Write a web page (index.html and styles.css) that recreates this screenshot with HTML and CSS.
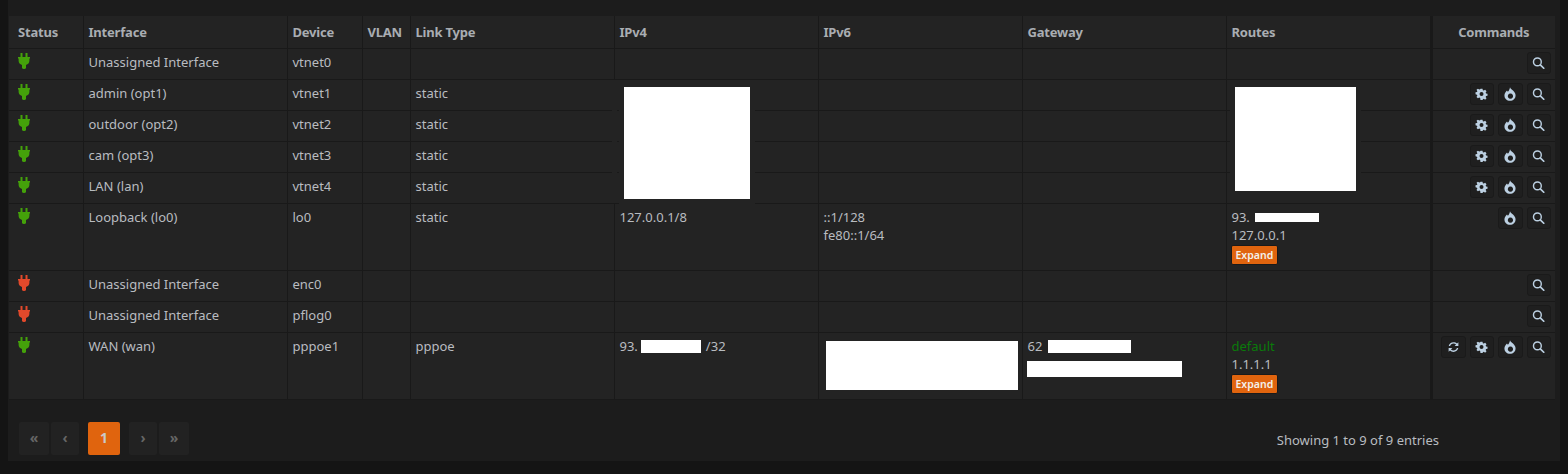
FILE: index.html
```html
<!DOCTYPE html>
<html lang="en">
<head>
<meta charset="utf-8">
<title>Interfaces overview</title>
<link rel="stylesheet" href="styles.css">
</head>
<body>
<svg class="sprites" width="0" height="0" aria-hidden="true">
  <symbol id="plug" viewBox="0 0 12 16"><path d="M2.500 0h2v4h3V0h2v4H12v1.500h-.6v2.200c0 2-1.300 3.700-3.400 4.200V15.500H6.900V16H5.100v-.5H4V11.900C1.900 11.400.6 9.700.6 7.700V5.500H0V4h2.500z"/></symbol>
  <symbol id="cog" viewBox="0 0 16 16"><path d="M6.500 0h3l.5 2.300 1.400.6 2-1.300 2.100 2.100-1.300 2 .6 1.400 2.200.4v3l-2.200.5-.6 1.400 1.300 2-2.100 2.100-2-1.300-1.400.6-.5 2.200h-3L6 13.800l-1.400-.6-2 1.300L.5 12.400l1.300-2-.6-1.400L-1 8.500v-3l2.200-.4.6-1.400-1.300-2L2.600 0l2 1.300L6 .7zM8 5a3 3 0 1 0 0 6 3 3 0 0 0 0-6z" transform="translate(.9 .9) scale(.89)" fill-rule="evenodd"/></symbol>
  <symbol id="fire" viewBox="0 0 14 16"><path fill-rule="evenodd" d="M7 0c.5 1.500 2 2.500 3.500 4 2 1.800 3 3.700 3 5.700C13.500 13.300 10.600 16 7 16S.5 13.300.5 9.700C.5 7.200 2 5.200 3.500 3.800l1 1.700C5.700 4 6.800 2 7 0zM7.500 7.500a3 3 0 1 0 .01 0z"/></symbol>
  <symbol id="search" viewBox="0 0 16 16"><circle cx="6.500" cy="6.500" r="5.200" fill="none" stroke="currentColor" stroke-width="1.900"/><path d="M10.400 10.400L15 15" fill="none" stroke="currentColor" stroke-width="2.300" stroke-linecap="round"/></symbol>
  <symbol id="refresh" viewBox="0 0 16 16"><path d="M1.600 6.700C2.200 3.600 4.800 1.500 8 1.500c1.900 0 3.500.7 4.700 1.900L14.500 1.600v5h-5l1.900-1.900c-.9-.9-2.100-1.400-3.400-1.400-2.200 0-4 1.400-4.500 3.400zM14.400 9.300C13.800 12.400 11.200 14.500 8 14.500c-1.900 0-3.500-.7-4.700-1.900L1.500 14.400v-5h5l-1.900 1.900c.9.900 2.100 1.400 3.400 1.400 2.200 0 4-1.400 4.500-3.400z"/></symbol>
</svg>
<main class="panel">
  <div class="table-wrap">
    <table class="grid">
      <colgroup>
        <col class="c-status"><col class="c-iface"><col class="c-device"><col class="c-vlan"><col class="c-link">
        <col class="c-addr"><col class="c-addr"><col class="c-addr"><col class="c-routes"><col class="c-cmd">
      </colgroup>
      <thead>
        <tr><th>Status</th><th>Interface</th><th>Device</th><th>VLAN</th><th>Link Type</th><th>IPv4</th><th>IPv6</th><th>Gateway</th><th>Routes</th><th class="cmd-head">Commands</th></tr>
      </thead>
      <tbody>
        <tr>
          <td><svg class="plug up"><use href="#plug"/></svg></td><td>Unassigned Interface</td><td>vtnet0</td><td></td><td></td><td></td><td></td><td></td><td></td>
          <td class="cmds"><div class="btns"><button class="btn"><svg class="ico"><use href="#search"/></svg></button></div></td>
        </tr>
        <tr>
          <td><svg class="plug up"><use href="#plug"/></svg></td><td>admin (opt1)</td><td>vtnet1</td><td></td><td>static</td><td></td><td></td><td></td><td></td>
          <td class="cmds"><div class="btns"><button class="btn"><svg class="ico"><use href="#cog"/></svg></button><button class="btn"><svg class="ico tall-ico"><use href="#fire"/></svg></button><button class="btn"><svg class="ico"><use href="#search"/></svg></button></div></td>
        </tr>
        <tr>
          <td><svg class="plug up"><use href="#plug"/></svg></td><td>outdoor (opt2)</td><td>vtnet2</td><td></td><td>static</td><td></td><td></td><td></td><td></td>
          <td class="cmds"><div class="btns"><button class="btn"><svg class="ico"><use href="#cog"/></svg></button><button class="btn"><svg class="ico tall-ico"><use href="#fire"/></svg></button><button class="btn"><svg class="ico"><use href="#search"/></svg></button></div></td>
        </tr>
        <tr>
          <td><svg class="plug up"><use href="#plug"/></svg></td><td>cam (opt3)</td><td>vtnet3</td><td></td><td>static</td><td></td><td></td><td></td><td></td>
          <td class="cmds"><div class="btns"><button class="btn"><svg class="ico"><use href="#cog"/></svg></button><button class="btn"><svg class="ico tall-ico"><use href="#fire"/></svg></button><button class="btn"><svg class="ico"><use href="#search"/></svg></button></div></td>
        </tr>
        <tr>
          <td><svg class="plug up"><use href="#plug"/></svg></td><td>LAN (lan)</td><td>vtnet4</td><td></td><td>static</td><td></td><td></td><td></td><td></td>
          <td class="cmds"><div class="btns"><button class="btn"><svg class="ico"><use href="#cog"/></svg></button><button class="btn"><svg class="ico tall-ico"><use href="#fire"/></svg></button><button class="btn"><svg class="ico"><use href="#search"/></svg></button></div></td>
        </tr>
        <tr class="tall">
          <td><svg class="plug up"><use href="#plug"/></svg></td><td>Loopback (lo0)</td><td>lo0</td><td></td><td>static</td><td>127.0.0.1/8</td><td>::1/128<br>fe80::1/64</td><td></td>
          <td>93.<span class="mask mask-route"></span><br>127.0.0.1<br><span class="expand">Expand</span></td>
          <td class="cmds"><div class="btns"><button class="btn"><svg class="ico tall-ico"><use href="#fire"/></svg></button><button class="btn"><svg class="ico"><use href="#search"/></svg></button></div></td>
        </tr>
        <tr>
          <td><svg class="plug down"><use href="#plug"/></svg></td><td>Unassigned Interface</td><td>enc0</td><td></td><td></td><td></td><td></td><td></td><td></td>
          <td class="cmds"><div class="btns"><button class="btn"><svg class="ico"><use href="#search"/></svg></button></div></td>
        </tr>
        <tr>
          <td><svg class="plug down"><use href="#plug"/></svg></td><td>Unassigned Interface</td><td>pflog0</td><td></td><td></td><td></td><td></td><td></td><td></td>
          <td class="cmds"><div class="btns"><button class="btn"><svg class="ico"><use href="#search"/></svg></button></div></td>
        </tr>
        <tr class="tall">
          <td><svg class="plug up"><use href="#plug"/></svg></td><td>WAN (wan)</td><td>pppoe1</td><td></td><td>pppoe</td><td>93.<span class="mask mask-v4"></span>/32</td><td></td>
          <td>62<span class="mask mask-gw"></span></td>
          <td><span class="default">default</span><br>1.1.1.1<br><span class="expand">Expand</span></td>
          <td class="cmds"><div class="btns"><button class="btn"><svg class="ico"><use href="#refresh"/></svg></button><button class="btn"><svg class="ico"><use href="#cog"/></svg></button><button class="btn"><svg class="ico tall-ico"><use href="#fire"/></svg></button><button class="btn"><svg class="ico"><use href="#search"/></svg></button></div></td>
        </tr>
      </tbody>
    </table>
    <div class="redact r-v4"></div>
    <div class="redact r-routes"></div>
    <div class="redact r-v6"></div>
    <div class="redact r-gw"></div>
  </div>
  <footer class="foot">
    <nav class="pager">
      <a class="pg">«</a><a class="pg">‹</a><a class="pg current">1</a><a class="pg">›</a><a class="pg">»</a>
    </nav>
    <div class="info">Showing 1 to 9 of 9 entries</div>
  </footer>
</main>
</body>
</html>
```
FILE: styles.css
```css
* { box-sizing: border-box; }
html, body { margin: 0; height: 100%; }
body {
  background: #141414;
  color: #b9bcc0;
  font: 13px/18px "Noto Sans", "Open Sans", sans-serif;
  padding: 0 8px;
  overflow: hidden;
}
.sprites { position: absolute; }
.panel { background: #1c1c1c; height: 461px; padding: 16px 4px 0 1px; }
.table-wrap { position: relative; }
.grid {
  width: 1546px;
  table-layout: fixed;
  border-collapse: collapse;
  background: #232323;
}
.c-status { width: 74px; }
.c-iface { width: 204px; }
.c-device { width: 75px; }
.c-vlan { width: 48px; }
.c-link { width: 204px; }
.c-addr { width: 204px; }
.c-routes { width: 205px; }
.c-cmd { width: 124px; }
th, td {
  border: 1px solid #191919;
  padding: 4px 5px;
  text-align: left;
  vertical-align: top;
}
thead th { height: 32px; padding: 7px 5px; font-weight: 700; letter-spacing: -.2px; color: #a9adb2; }
tbody tr { height: 31px; }
tbody tr.tall { height: 67px; }
th:first-child, td:first-child { border-left: 0; padding-left: 9px; }
th:last-child, td:last-child { border-right: 0; }
thead th { border-top: 0; }
th:nth-child(10), td:nth-child(10) { border-left: 3px solid #191919; }
.cmd-head { text-align: center; }
.plug { width: 12px; height: 16px; display: block; }
.plug.up { fill: #44a10a; }
.plug.down { fill: #e2492b; }
.cmds { padding: 3px 4px 0 0; }
.btns { display: flex; justify-content: flex-end; gap: 4px; }
.btn {
  width: 24.5px;
  height: 22px;
  padding: 0;
  background: #1f1f1f;
  border: 1px solid #1a1a1a;
  border-radius: 3px;
  color: #bcd0e2;
  display: flex;
  align-items: center;
  justify-content: center;
}
.ico { width: 13px; height: 12px; fill: currentColor; }
.ico.tall-ico { width: 12px; height: 14px; }
.expand {
  display: inline-block;
  background: #e0640e;
  color: #f4f0ea;
  font-size: 10.5px;
  font-weight: 600;
  line-height: 16px;
  height: 20px;
  margin: 1px 0 0 -1px;
  padding: 1px 4px;
  border-radius: 2px;
  border: 1px solid #1a1a1a;
  vertical-align: top;
}
.default { color: #0a7a0a; }
.mask { display: inline-block; background: #fff; height: 13px; vertical-align: -2px; }
.mask-route { width: 64px; margin-left: 5px; height: 9px; vertical-align: 0; }
.mask-v4 { width: 60px; margin: 0 5px 0 3px; }
.mask-gw { width: 83px; margin-left: 6px; height: 13px; }
.redact { position: absolute; background: #fff; }
.r-v4 { left: 615px; top: 71px; width: 126px; height: 112px; outline: 5px solid #232323; }
.r-v4::before {
  content: "";
  position: absolute;
  left: -12px;
  top: -7px;
  bottom: -4px;
  width: 5px;
  background: #232323;
}
.r-routes { left: 1226px; top: 71px; width: 121px; height: 104px; outline: 5px solid #232323; }
.r-v6 { left: 817px; top: 325px; width: 192px; height: 49px; }
.r-gw { left: 1018px; top: 345px; width: 155px; height: 16px; }
.foot {
  display: flex;
  justify-content: space-between;
  align-items: center;
  padding: 22px 117px 0 10px;
}
.pager { display: flex; gap: 2px; }
.pg {
  width: 30px;
  height: 33px;
  background: #222;
  color: #666;
  border-radius: 2px;
  font-weight: 700;
  font-size: 14px;
  line-height: 32px;
  text-align: center;
}
.pg:nth-child(2), .pg:nth-child(4) { width: 28px; }
.pg.current { width: 32px; background: #e0640e; color: #c9c9c9; margin: 0 7px; }
.info { padding-top: 2px; }
```
